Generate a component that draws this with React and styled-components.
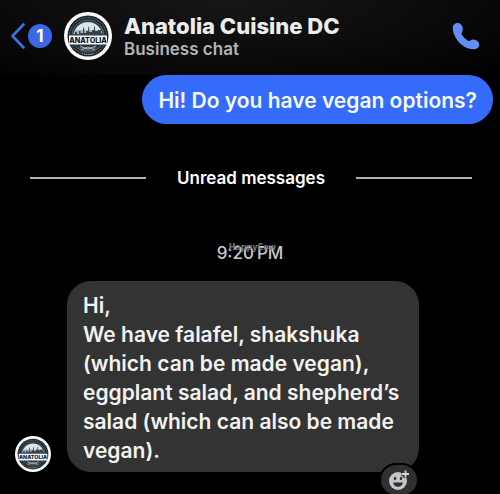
import React from "react";
import styled, { createGlobalStyle } from "styled-components";

const reply = [
  "Hi,",
  "We have falafel, shakshuka",
  "(which can be made vegan),",
  "eggplant salad, and shepherd’s",
  "salad (which can also be made",
  "vegan).",
];

function Logo({ size }) {
  return (
    <LogoSvg $size={size} viewBox="0 0 48 48" role="img" aria-label="Anatolia">
      <circle cx="24" cy="24" r="24" fill="#fbfcfc" />
      <circle cx="24" cy="24" r="20.5" fill="#1d262d" />
      <circle cx="24" cy="24" r="18.4" fill="none" stroke="#6f7a80" strokeWidth="1" strokeDasharray="1.4 1" />
      <circle cx="24" cy="24" r="16.2" fill="#26323a" stroke="#7d888e" strokeWidth="0.6" />
      <path d="M9 25a15 15 0 0 1 30 0z" fill="#a9bac3" />
      <path d="M11.500 18a14 14 0 0 1 25 0z" fill="#dbe4e8" />
      <path
        d="M9 26v-4h2v-2h2v2h2v-3h1.500v2H19v-4l.6-2 .6 2v4h2v-2h2v-3l.5-2 .5 2v4H28v-2h2v-3l.5-1 .5 1v4h3v-1h3v3h2v3z"
        fill="#35434b"
      />
      <path d="M15 35h18l-3 4H18z" fill="#46545c" />
      <path d="M16 34l8 3 8-3M17 38l7-3 7 3" fill="none" stroke="#c3cdd1" strokeWidth="0.8" />
      <path d="M18 41.500q6 2 12 0" fill="none" stroke="#929da3" strokeWidth="1.2" strokeDasharray="1.2 0.8" />
      <rect x="5" y="23.5" width="38" height="9" rx="0.5" fill="#f4f6f7" />
      <text
        x="24"
        y="30.800"
        textAnchor="middle"
        fill="#10171c"
        fontFamily="Inter, sans-serif"
        fontWeight="800"
        fontSize="7.2"
      >
        ANATOLIA
      </text>
    </LogoSvg>
  );
}

function App() {
  return (
    <>
      <GlobalStyle />
      <Header>
        <BackButton type="button" aria-label="Back, 1 unread chat">
          <svg width="14" height="26" viewBox="0 0 14 26" fill="none">
            <path d="M12.5 1.5L1.5 13l11 11.5" stroke="#3f6fe6" strokeWidth="2.6" strokeLinecap="round" strokeLinejoin="round" />
          </svg>
          <Count>1</Count>
        </BackButton>
        <Logo size={48} />
        <Contact>
          <Name>Anatolia Cuisine DC</Name>
          <Status>Business chat</Status>
        </Contact>
        <CallButton type="button" aria-label="Call">
          <svg width="28" height="28" viewBox="0 0 28 28">
            <path
              d="M5.500 1C2.700 1 .8 3.200.8 6.200C.8 11 4 17.500 8.500 21.800C12.500 25.500 17.500 27.300 21.500 27.300C25 27.300 27.300 25.300 27.300 23C27.300 20 24.500 17.800 21.500 17.600C19.500 17.400 18.200 19 16.800 19C15 19 9.500 13.500 9.500 11.800C9.500 10.500 10.800 9.500 10.800 7C10.800 3.500 8.500 1 5.500 1z"
              fill="#618ff5"
            />
          </svg>
        </CallButton>
      </Header>
      <Thread>
        <SentBubble>Hi! Do you have vegan options?</SentBubble>
        <Divider>Unread messages</Divider>
        <Time>
          {"9:20\u202fPM"}
          <Watermark>HappyCow</Watermark>
        </Time>
        <ReceivedRow>
          <Logo size={36} />
          <ReceivedBubble>
            {reply.map((line) => (
              <div key={line}>{line}</div>
            ))}
            <ReactButton type="button" aria-label="Add reaction">
              <svg width="22" height="22" viewBox="0 0 22 22">
                <circle cx="10" cy="12" r="9" fill="#c6c6ca" />
                <ellipse cx="7" cy="9.5" rx="1.2" ry="1.7" fill="#303032" />
                <ellipse cx="13" cy="9.5" rx="1.2" ry="1.7" fill="#303032" />
                <path d="M5 13.5h10c-.5 2.800-2.500 4.200-5 4.200s-4.500-1.400-5-4.200z" fill="#303032" />
                <path d="M17.500 1v8M13.500 5h8" stroke="#303032" strokeWidth="4.5" />
                <path d="M17.500 1.500v7M14 5h7" stroke="#d8d8dc" strokeWidth="1.8" />
              </svg>
            </ReactButton>
          </ReceivedBubble>
        </ReceivedRow>
      </Thread>
    </>
  );
}

const GlobalStyle = createGlobalStyle`
  * {
    box-sizing: border-box;
  }
  body {
    margin: 0;
    min-height: 100vh;
    overflow: hidden auto;
    background: #000;
    color: #f2f2f2;
    font-family: Inter, "Liberation Sans", sans-serif;
  }
  button {
    border: none;
    padding: 0;
    background: none;
    font: inherit;
    cursor: pointer;
  }
  svg {
    display: block;
  }
`;

const LogoSvg = styled.svg`
  flex: none;
  width: ${({ $size }) => $size}px;
  height: ${({ $size }) => $size}px;
`;

const Header = styled.header`
  display: flex;
  align-items: center;
  gap: 12px;
  padding: 12px 20px 15px 11px;
  background: radial-gradient(ellipse at 45% 0%, #161616 0%, #0c0c0c 50%, #000 100%);
`;

const BackButton = styled.button`
  display: flex;
  align-items: center;
  gap: 3px;
`;

const Count = styled.span`
  width: 24px;
  height: 24px;
  border-radius: 50%;
  background: #3a68e4;
  color: #fff;
  font-size: 17px;
  font-weight: 700;
  line-height: 24px;
  text-align: center;
`;

const Contact = styled.div`
  flex: 1;
  min-width: 0;
`;

const Name = styled.h1`
  margin: 2px 0 0;
  color: #ececec;
  font-size: 22px;
  font-weight: 800;
  line-height: 24px;
`;

const Status = styled.p`
  margin: 0;
  color: #b4b4b8;
  font-size: 17px;
  font-weight: 600;
  line-height: 22px;
`;

const CallButton = styled.button`
  flex: none;
`;

const Thread = styled.main`
  display: flex;
  flex-direction: column;
  padding-bottom: 22px;
  overflow: hidden;
`;

const SentBubble = styled.div`
  align-self: flex-end;
  margin-right: 7px;
  padding: 11px 16px 9px;
  border-radius: 25px;
  background: #346bf8;
  color: #f4f8ff;
  font-size: 21px;
  font-weight: 600;
  line-height: 29px;
`;

const Divider = styled.h2`
  display: flex;
  align-items: center;
  gap: 31px;
  margin: 42px 28px 0 30px;
  color: #fff;
  font-size: 17px;
  font-weight: 600;
  line-height: 24px;

  &::before,
  &::after {
    content: "";
    flex: 1;
    height: 2px;
    background: #b0b0b0;
  }
`;

const Time = styled.div`
  position: relative;
  align-self: center;
  margin: 51px 0 16px;
  color: #c9c9cd;
  font-size: 17px;
  font-weight: 500;
  line-height: 24px;
`;

const Watermark = styled.span`
  position: absolute;
  top: 2px;
  left: 12px;
  color: #77777b;
  font-family: "DejaVu Sans", sans-serif;
  font-size: 8px;
  font-weight: 700;
  line-height: 10px;
`;

const ReceivedRow = styled.div`
  display: flex;
  align-items: flex-end;
  gap: 16px;
  padding-left: 15px;
`;

const ReceivedBubble = styled.div`
  position: relative;
  padding: 10px 20px 7px 16px;
  border-radius: 24px;
  background: #333;
  font-size: 21px;
  font-weight: 600;
  line-height: 29px;
`;

const ReactButton = styled.button`
  position: absolute;
  right: 0;
  bottom: -25px;
  display: flex;
  align-items: center;
  justify-content: center;
  width: 40px;
  height: 34px;
  border: 2px solid #000;
  border-radius: 17px;
  background: #303032;
`;

export default App;
